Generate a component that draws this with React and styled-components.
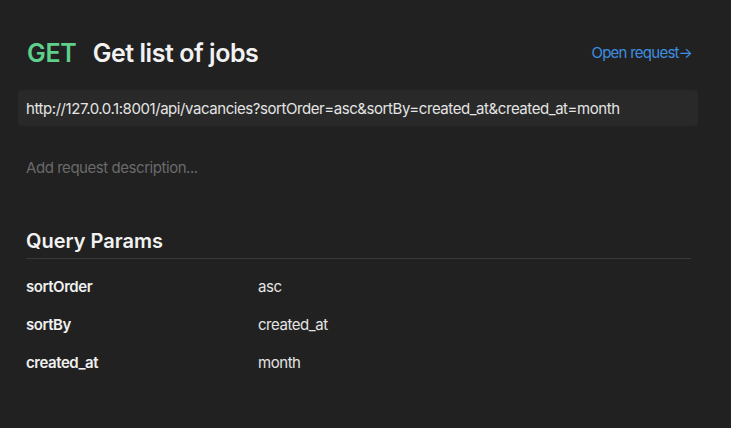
import React from "react";
import styled, { createGlobalStyle } from "styled-components";

const Global = createGlobalStyle`
  html, body { margin: 0; padding: 0; background: #212121; }
  body { font-family: Inter, "Noto Sans", sans-serif; -webkit-font-smoothing: antialiased; }
`;

const Page = styled.div`
  width: 731px;
  height: 428px;
  background: #212121;
  box-sizing: border-box;
  padding: 36px 40px 0 18px;
  display: flex;
  flex-direction: column;
`;

const Header = styled.div`
  display: flex;
  align-items: center;
  justify-content: space-between;
  padding-left: 9px;
  padding-right: 0;
  height: 34px;
`;

const TitleGroup = styled.div`
  display: flex;
  align-items: baseline;
  gap: 16px;
`;

const Method = styled.span`
  color: #5fcf8c;
  font-size: 25px;
  font-weight: 600;
  letter-spacing: -0.01em;
`;

const Title = styled.h1`
  margin: 0;
  color: #f2f2f2;
  font-size: 25px;
  font-weight: 600;
  letter-spacing: -0.018em;
`;

const OpenLink = styled.a`
  color: #3d8fe0;
  font-size: 15px;
  letter-spacing: -0.05em;
  text-decoration: none;
  position: relative;
  top: -1px;
  left: 1px;
`;

const UrlBox = styled.div`
  margin-top: 20px;
  height: 36px;
  background: #292929;
  border-radius: 4px;
  display: flex;
  align-items: center;
  padding: 0 8px;
  color: #e4e4e4;
  font-size: 15px;
  letter-spacing: -0.029em;
  margin-right: -7px;
`;

const Description = styled.div`
  margin-top: 32px;
  padding-left: 8px;
  color: #6a6a6a;
  font-size: 15px;
  letter-spacing: -0.03em;
`;

const Section = styled.div`
  margin-top: 52px;
  padding-left: 8px;
  display: flex;
  flex-direction: column;
`;

const SectionTitle = styled.h2`
  margin: 0;
  color: #f2f2f2;
  font-size: 20px;
  font-weight: 600;
  padding-bottom: 5px;
  border-bottom: 1px solid #3a3a3a;
`;

const Rows = styled.div`
  margin-top: 18px;
  display: flex;
  flex-direction: column;
  gap: 19px;
`;

const Row = styled.div`
  display: grid;
  grid-template-columns: 232px 1fr;
  font-size: 15px;
  line-height: 19px;
  letter-spacing: -0.03em;
`;

const Key = styled.span`
  color: #f0f0f0;
  font-weight: 600;
`;

const Value = styled.span`
  color: #e4e4e4;
`;

const params = [
  ["sortOrder", "asc"],
  ["sortBy", "created_at"],
  ["created_at", "month"],
];

export default function App() {
  return (
    <>
      <Global />
      <Page>
        <Header>
          <TitleGroup>
            <Method>GET</Method>
            <Title>Get list of jobs</Title>
          </TitleGroup>
          <OpenLink href="#">Open request→</OpenLink>
        </Header>
        <UrlBox>http://127.0.0.1:8001/api/vacancies?sortOrder=asc&amp;sortBy=created_at&amp;created_at=month</UrlBox>
        <Description>Add request description...</Description>
        <Section>
          <SectionTitle>Query Params</SectionTitle>
          <Rows>
            {params.map(([k, v]) => (
              <Row key={k}>
                <Key>{k}</Key>
                <Value>{v}</Value>
              </Row>
            ))}
          </Rows>
        </Section>
      </Page>
    </>
  );
}
